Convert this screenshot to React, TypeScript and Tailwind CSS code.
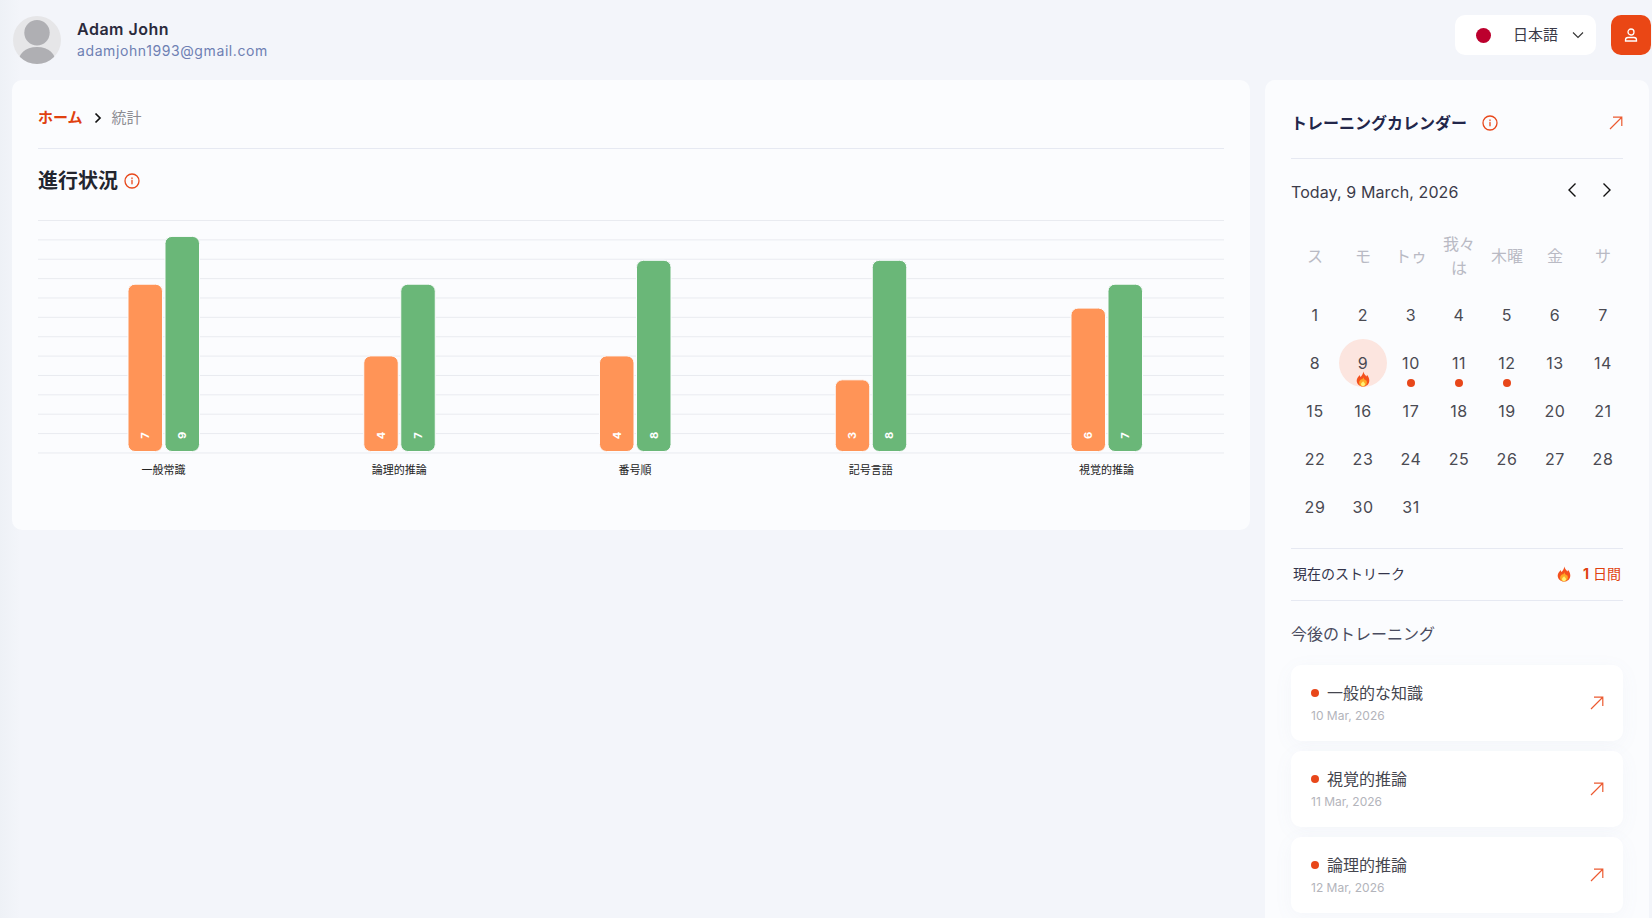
import React from "react";

const sans = "font-['Inter','Noto_Sans_CJK_JP',sans-serif]";

function Info({ size = 16 }: { size?: number }) {
  return (
    <svg width={size} height={size} viewBox="0 0 16 16" fill="none" stroke="#e8471a" strokeWidth="1.3" className="shrink-0">
      <circle cx="8" cy="8" r="7" />
      <path d="M8 7.4v3.4M8 5v.6" strokeLinecap="round" />
    </svg>
  );
}

function Arrow() {
  return (
    <svg width="14" height="14" viewBox="0 0 14 14" fill="none" stroke="#ec5a30" strokeWidth="1.2" className="shrink-0">
      <path d="M1 13 13 1M4 1.2h8.8V10" />
    </svg>
  );
}

function Flame({ size = 16 }: { size?: number }) {
  return (
    <svg width={size} height={size} viewBox="0 0 16 16" className="shrink-0">
      <path d="M8.4.4c.5 2.6 2 3.7 3.1 5.2.3-.6.4-1.2.4-1.9 1.5 1.6 2.4 3.6 2.4 5.8 0 3.6-2.7 6.1-6.3 6.1S1.700 13 1.700 9.600c0-2.700 1.800-4.200 3-5.700.1.800.3 1.400.8 2C6.800 4.600 8 2.800 8.400.400Z" fill="#f4511e" />
      <path d="M8.300 6.300c.3 1.500 1.300 2.100 2.100 3.100.2-.3.300-.6.300-.9.800 1 1.200 1.900 1.200 3 0 2.300-1.800 3.900-3.900 3.900s-3.900-1.500-3.900-3.700c0-1.900 1.400-2.700 2.300-4 .1.500.2.800.5 1.100.7-.7 1.200-1.500 1.400-2.500Z" fill="#ffa726" />
      <path d="M8.100 10c.2.900.8 1.300 1.300 1.800.4.500.6 1 .6 1.500 0 1.100-.9 1.900-2 1.900s-2-.8-2-1.900c0-1.500 1.600-1.900 2.100-3.300Z" fill="#fff176" />
    </svg>
  );
}

const grid = Array.from({ length: 13 }, (_, i) => 12.5 + i * 19.37);
const groups = [
  { label: "一般常識", a: 7, b: 9 },
  { label: "論理的推論", a: 4, b: 7 },
  { label: "番号順", a: 4, b: 8 },
  { label: "記号言語", a: 3, b: 8 },
  { label: "視覚的推論", a: 6, b: 7 },
];

function Chart() {
  const base = 243.5;
  const unit = 23.9;
  return (
    <svg width="1186" height="272" viewBox="0 0 1186 272" className="mt-[13px] block">
      {grid.map((y) => (
        <line key={y} x1="0" x2="1186" y1={y} y2={y} stroke="#e9ebf0" strokeWidth="1" />
      ))}
      {groups.map((g, i) => {
        const cx = 125.5 + i * 235.75;
        const bars = [
          { x: cx - 35.5, v: g.a, c: "#ff9457" },
          { x: cx + 1.5, v: g.b, c: "#6ab778" },
        ];
        return (
          <g key={g.label}>
            {bars.map((b) => (
              <g key={b.x}>
                <rect x={b.x} y={base - b.v * unit} width="34.500" height={b.v * unit} rx="7" fill={b.c} stroke="#fbfcfe" strokeWidth="1" />
                <text
                  x={b.x + 17}
                  y={base - 16}
                  fill="#fff"
                  fontSize="11"
                  fontWeight="700"
                  fontFamily="Inter, sans-serif"
                  textAnchor="middle"
                  dominantBaseline="central"
                  transform={`rotate(-90 ${b.x + 17} ${base - 16})`}
                >
                  {b.v}
                </text>
              </g>
            ))}
            <text x={cx} y="266" fill="#222" fontSize="11" textAnchor="middle" fontFamily="'Noto Sans CJK JP', sans-serif">
              {g.label}
            </text>
          </g>
        );
      })}
    </svg>
  );
}

const weekdays = ["ス", "モ", "トゥ", "我々は", "木曜", "金", "サ"];
const days = Array.from({ length: 31 }, (_, i) => i + 1);

function Calendar() {
  return (
    <div className="grid grid-cols-[repeat(7,48px)] mt-[20px]">
      {weekdays.map((w) => (
        <div key={w} className="h-[63px] pb-[7px] flex items-center justify-center text-center text-[16px] leading-[24px] text-[#b9bac4] px-2">
          {w}
        </div>
      ))}
      {days.map((d) => (
        <div key={d} className={`relative h-[48px] w-[48px] flex items-center justify-center text-[16px] tracking-[0.6px] text-[#4a4a52] ${d === 9 ? "rounded-full bg-[#fce5df]" : ""}`}>
          {d}
          {d === 9 && (
            <span className="absolute left-[16px] top-[32px]">
              <Flame />
            </span>
          )}
          {d >= 10 && d <= 12 && <span className="absolute left-[20px] top-[40px] w-2 h-2 rounded-full bg-[#e8471a]" />}
        </div>
      ))}
    </div>
  );
}

const upcoming = [
  { t: "一般的な知識", d: "10 Mar, 2026" },
  { t: "視覚的推論", d: "11 Mar, 2026" },
  { t: "論理的推論", d: "12 Mar, 2026" },
];

export default function App() {
  return (
    <div className={`h-[918px] overflow-hidden bg-[linear-gradient(90deg,#eef1f6,#f3f5fa_20px)] ${sans}`}>
      <header className="h-[80px] flex items-center justify-between pl-[13px] pr-[1px]">
        <div className="flex items-center gap-4">
          <svg width="48" height="48" viewBox="0 0 48 48" className="shrink-0">
            <defs>
              <clipPath id="av">
                <circle cx="24" cy="24" r="24" />
              </clipPath>
            </defs>
            <circle cx="24" cy="24" r="24" fill="#e6e6e8" />
            <g clipPath="url(#av)" fill="#afafb3">
              <circle cx="24" cy="16.700" r="12.700" />
              <path d="M5 48c0-10 7-17 19-17s19 7 19 17Z" />
            </g>
          </svg>
          <div>
            <div className="text-[16px] leading-[22px] font-semibold tracking-[0.5px] text-[#2a2a3c]">Adam John</div>
            <div className="text-[14px] leading-[22px] tracking-[0.6px] text-[#6e80b3]">adamjohn1993@gmail.com</div>
          </div>
        </div>
        <div className="flex items-center gap-[15px] mb-[10px]">
          <div className="w-[141px] h-[40px] rounded-[10px] bg-white flex items-center pl-[21px]">
            <span className="w-[15px] h-[15px] rounded-full bg-[#bc002d]" />
            <span className="ml-[22px] text-[15px] text-[#3a3a48]">日本語</span>
            <svg width="12" height="8" viewBox="0 0 12 8" fill="none" stroke="#333" strokeWidth="1.100" className="ml-[14px]">
              <path d="M1 1.500 6 6.500 11 1.500" />
            </svg>
          </div>
          <div className="w-[40px] h-[40px] rounded-[10px] bg-[#ea4715] flex items-center justify-center">
            <svg width="14" height="14" viewBox="0 0 14 14" fill="none" stroke="#fff" strokeWidth="1.300">
              <circle cx="7" cy="4" r="3" />
              <path d="M1.500 13v-1c0-1.500 1-2.500 2.500-2.500h6c1.500 0 2.500 1 2.500 2.500v1Z" />
            </svg>
          </div>
        </div>
      </header>

      <main className="flex items-start pl-[12px] gap-[15px]">
        <section className="w-[1238px] h-[450px] rounded-[10px] bg-[#fbfcfe] px-[26px] pt-[27px]">
          <nav className="h-[22px] flex items-center text-[15px] leading-[22px]">
            <span className="font-semibold text-[#e0410f]">ホーム</span>
            <svg width="8" height="12" viewBox="0 0 8 12" fill="none" stroke="#111" strokeWidth="1.700" className="ml-[11px] mr-[10px]">
              <path d="M1.500 1.500 6 6 1.500 10.500" />
            </svg>
            <span className="text-[#8d8d93]">統計</span>
          </nav>
          <div className="h-px bg-[#e6e9f2] mt-[19px]" />
          <div className="flex items-center gap-[6px] mt-[18px] h-[28px]">
            <h1 className="text-[20px] font-semibold text-[#22252e]">進行状況</h1>
            <Info />
          </div>
          <Chart />
        </section>

        <aside className="w-[384px] h-[860px] rounded-[10px] bg-[#fbfcfe] px-[26px] pt-[26px] shrink-0">
          <div className="flex items-center justify-between h-[34px]">
            <div className="flex items-center gap-[15px]">
              <span className="text-[16px] font-bold text-[#22264a]">トレーニングカレンダー</span>
              <Info />
            </div>
            <Arrow />
          </div>
          <div className="h-px bg-[#e6e9f2] mt-[18px]" />
          <div className="flex items-center justify-between mt-[17px] h-[32px]">
            <span className="text-[16px] tracking-[0.1px] text-[#3b3b4a]">Today, 9 March, 2026</span>
            <div className="flex items-center gap-[25px] pr-[11px] mb-[4px]">
              <svg width="10" height="16" viewBox="0 0 10 16" fill="none" stroke="#111" strokeWidth="1.400">
                <path d="M8.500 1.500 2 8l6.500 6.500" />
              </svg>
              <svg width="10" height="16" viewBox="0 0 10 16" fill="none" stroke="#111" strokeWidth="1.400">
                <path d="M1.500 1.500 8 8l-6.500 6.500" />
              </svg>
            </div>
          </div>
          <Calendar />
          <div className="h-px bg-[#e6e9f2] mt-[17px]" />
          <div className="h-[51px] pb-[2px] flex items-center justify-between pl-[2px] pr-[2px]">
            <span className="text-[14px] text-[#33344a]">現在のストリーク</span>
            <span className="flex items-center gap-[11px] text-[14px] text-[#e0410f]">
              <Flame />
              <span>
                <b className="mr-[4px]">1</b>日間
              </span>
            </span>
          </div>
          <div className="h-px bg-[#e6e9f2]" />
          <div className="mt-[22px] text-[16px] leading-[22px] text-[#4a4c60]">今後のトレーニング</div>
          <div className="mt-[20px] flex flex-col gap-[10px]">
            {upcoming.map((u) => (
              <div key={u.d} className="h-[76px] rounded-[10px] bg-white shadow-[0_4px_20px_rgba(120,130,170,0.05)] flex items-center justify-between pl-[20px] pr-[19px]">
                <div>
                  <div className="flex items-center gap-[8px] h-[24px] text-[16px] text-[#45464f]">
                    <span className="w-2 h-2 rounded-full bg-[#e8471a]" />
                    {u.t}
                  </div>
                  <div className="mt-[2px] text-[12px] text-[#b3b4bb]">{u.d}</div>
                </div>
                <Arrow />
              </div>
            ))}
          </div>
        </aside>
      </main>
    </div>
  );
}
